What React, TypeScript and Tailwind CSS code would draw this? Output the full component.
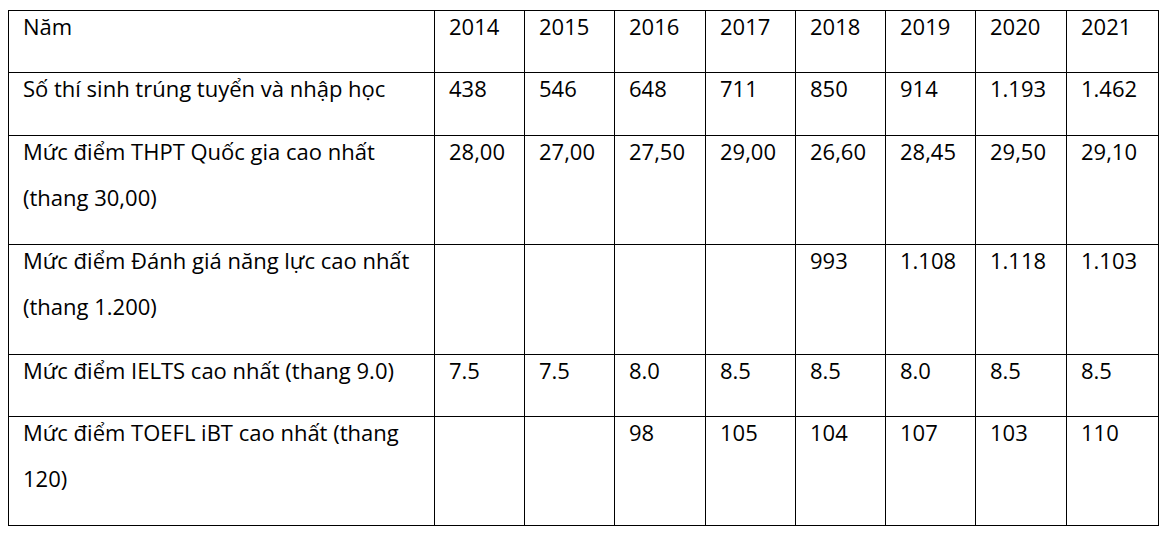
const years = ["2014", "2015", "2016", "2017", "2018", "2019", "2020", "2021"];

const rows: { label: string[]; values: string[]; h: string }[] = [
  {
    label: ["Số thí sinh trúng tuyển và nhập học"],
    values: ["438", "546", "648", "711", "850", "914", "1.193", "1.462"],
    h: "h-[63px]",
  },
  {
    label: ["Mức điểm THPT Quốc gia cao nhất", "(thang 30,00)"],
    values: ["28,00", "27,00", "27,50", "29,00", "26,60", "28,45", "29,50", "29,10"],
    h: "h-[109px]",
  },
  {
    label: ["Mức điểm Đánh giá năng lực cao nhất", "(thang 1.200)"],
    values: ["", "", "", "", "993", "1.108", "1.118", "1.103"],
    h: "h-[110px]",
  },
  {
    label: ["Mức điểm IELTS cao nhất (thang 9.0)"],
    values: ["7.5", "7.5", "8.0", "8.5", "8.5", "8.0", "8.5", "8.5"],
    h: "h-[62px]",
  },
  {
    label: ["Mức điểm TOEFL iBT cao nhất (thang", "120)"],
    values: ["", "", "98", "105", "104", "107", "103", "110"],
    h: "h-[109px]",
  },
];

const cell = "border border-black align-top pl-[14px] pt-0";

function Cell({ lines }: { lines: string[] }) {
  return (
    <td className={cell}>
      <div className="-mt-[8px]">
        {lines.map((l, j) => (
          <div key={j} className="whitespace-nowrap">{l}</div>
        ))}
      </div>
    </td>
  );
}

export default function App() {
  return (
    <div className="bg-white w-[1165px] h-[536px] pl-[8px] pt-[10px] text-[22px] leading-[46px] text-black font-['Open_Sans',sans-serif]">
      <table className="border-collapse table-fixed w-[1150px]">
        <colgroup>
          <col className="w-[426px]" />
          <col className="w-[90px]" />
          <col className="w-[90px]" />
          <col className="w-[91px]" />
          <col className="w-[90px]" />
          <col className="w-[90px]" />
          <col className="w-[90px]" />
          <col className="w-[91px]" />
          <col className="w-[92px]" />
        </colgroup>
        <tbody>
          <tr className="h-[62px]">
            <Cell lines={["Năm"]} />
            {years.map((y) => (
              <Cell key={y} lines={[y]} />
            ))}
          </tr>
          {rows.map((r, i) => (
            <tr key={i} className={r.h}>
              <Cell lines={r.label} />
              {r.values.map((v, j) => (
                <Cell key={j} lines={[v]} />
              ))}
            </tr>
          ))}
        </tbody>
      </table>
    </div>
  );
}
